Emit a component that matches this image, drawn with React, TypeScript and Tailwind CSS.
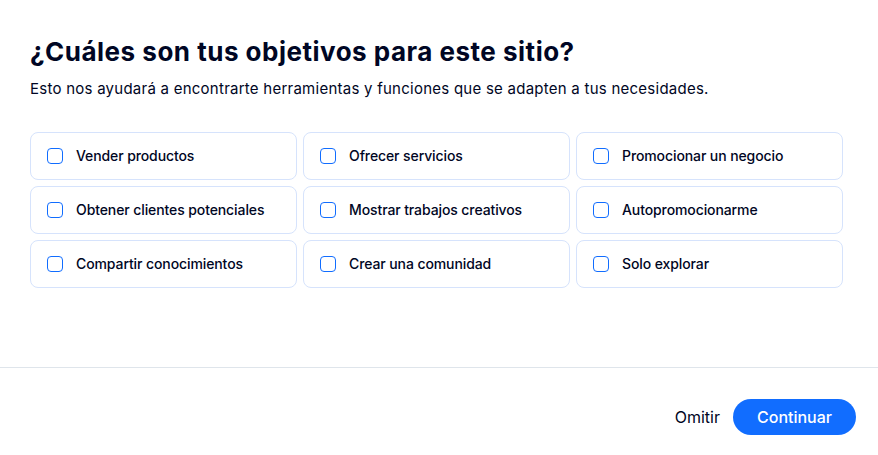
import React, { useState } from 'react';

const goals = [
  'Vender productos',
  'Ofrecer servicios',
  'Promocionar un negocio',
  'Obtener clientes potenciales',
  'Mostrar trabajos creativos',
  'Autopromocionarme',
  'Compartir conocimientos',
  'Crear una comunidad',
  'Solo explorar',
];

export default function App() {
  const [picked, setPicked] = useState<string[]>([]);

  const toggle = (g: string) =>
    setPicked((p) => (p.includes(g) ? p.filter((x) => x !== g) : [...p, g]));

  return (
    <div
      className="w-[878px] h-[455px] bg-white flex flex-col text-[#000624]"
      style={{ fontFamily: 'Inter, "Noto Sans", sans-serif' }}
    >
      {/* Body */}
      <div className="flex-1 px-[30px] pt-[34px]">
        <h1 className="text-[26px] leading-[36px] font-bold tracking-[0.5px]">
          ¿Cuáles son tus objetivos para este sitio?
        </h1>
        <p className="mt-[8px] text-[15px] leading-[22px] tracking-[0.25px]">
          Esto nos ayudará a encontrarte herramientas y funciones que se adapten a tus necesidades.
        </p>

        <div className="mt-[32px] grid grid-cols-[267px_267px_267px] gap-[6px]">
          {goals.map((g) => {
            const on = picked.includes(g);
            return (
              <button
                key={g}
                onClick={() => toggle(g)}
                className="h-[48px] flex items-center gap-[13px] pl-[16px] rounded-[8px] border border-[#d6e3fc] bg-white text-left hover:border-[#116dff]"
              >
                <span
                  className={`w-[16px] h-[16px] rounded-[4px] border-[1.5px] border-[#116dff] flex items-center justify-center ${on ? 'bg-[#116dff]' : 'bg-white'}`}
                >
                  {on && (
                    <svg width="10" height="8" viewBox="0 0 10 8" fill="none">
                      <path d="M1 4l3 3 5-6" stroke="white" strokeWidth="1.6" />
                    </svg>
                  )}
                </span>
                <span className="text-[14px] font-medium leading-[20px] tracking-[-0.1px]">{g}</span>
              </button>
            );
          })}
        </div>
      </div>

      {/* Footer */}
      <div className="h-[88px] border-t border-[#dfe5eb] flex items-center justify-end gap-[13px] pr-[22px] pt-[10px]">
        <button className="text-[16px] leading-[22px]">Omitir</button>
        <button className="h-[36px] w-[123px] rounded-full bg-[#116dff] text-white text-[16px] font-medium">
          Continuar
        </button>
      </div>
    </div>
  );
}
